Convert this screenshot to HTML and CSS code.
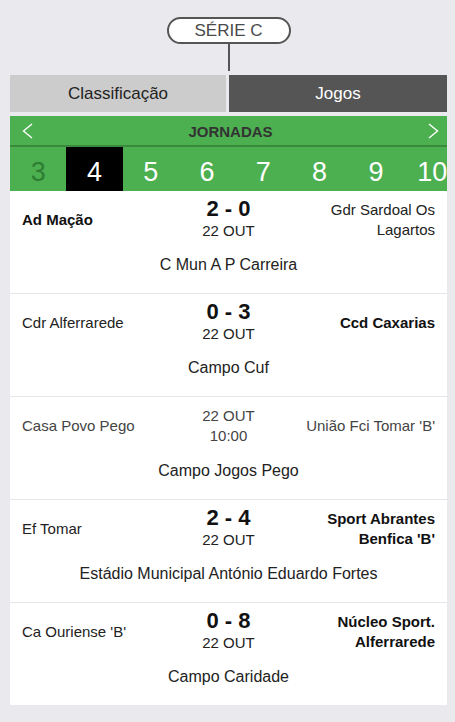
FILE: index.html
```html
<!DOCTYPE html>
<html lang="pt">
<head>
<meta charset="utf-8">
<title>Série C - Jogos</title>
<link rel="stylesheet" href="styles.css">
</head>
<body>
<div class="page">
  <header class="serie">
    <div class="pill">SÉRIE C</div>
    <div class="stem"></div>
  </header>

  <nav class="tabs">
    <div class="tab">Classificação</div>
    <div class="tab active">Jogos</div>
  </nav>

  <section class="rounds">
    <div class="rounds-head">
      <svg class="chev left" width="11" height="16" viewBox="0 0 11 16"><polyline points="10,1 1.5,8 10,15" fill="none" stroke="#fff" stroke-width="1.4"/></svg>
      <div class="rounds-title">JORNADAS</div>
      <svg class="chev right" width="11" height="16" viewBox="0 0 11 16"><polyline points="1,1 9.5,8 1,15" fill="none" stroke="#fff" stroke-width="1.4"/></svg>
    </div>
    <div class="rounds-nums">
      <div class="num past">3</div>
      <div class="num current">4</div>
      <div class="num">5</div>
      <div class="num">6</div>
      <div class="num">7</div>
      <div class="num">8</div>
      <div class="num">9</div>
      <div class="num">10</div>
    </div>
  </section>

  <section class="matches">
    <article class="match">
      <div class="match-row">
        <div class="team home win">Ad Mação</div>
        <div class="mid"><div class="score">2 - 0</div><div class="date">22 OUT</div></div>
        <div class="team away">Gdr Sardoal Os Lagartos</div>
      </div>
      <div class="venue">C Mun A P Carreira</div>
    </article>
    <article class="match">
      <div class="match-row">
        <div class="team home">Cdr Alferrarede</div>
        <div class="mid"><div class="score">0 - 3</div><div class="date">22 OUT</div></div>
        <div class="team away win">Ccd Caxarias</div>
      </div>
      <div class="venue">Campo Cuf</div>
    </article>
    <article class="match upcoming">
      <div class="match-row">
        <div class="team home">Casa Povo Pego</div>
        <div class="mid"><div class="when">22 OUT</div><div class="when">10:00</div></div>
        <div class="team away">União Fci Tomar 'B'</div>
      </div>
      <div class="venue">Campo Jogos Pego</div>
    </article>
    <article class="match">
      <div class="match-row">
        <div class="team home">Ef Tomar</div>
        <div class="mid"><div class="score">2 - 4</div><div class="date">22 OUT</div></div>
        <div class="team away win">Sport Abrantes Benfica 'B'</div>
      </div>
      <div class="venue">Estádio Municipal António Eduardo Fortes</div>
    </article>
    <article class="match">
      <div class="match-row">
        <div class="team home">Ca Ouriense 'B'</div>
        <div class="mid"><div class="score">0 - 8</div><div class="date">22 OUT</div></div>
        <div class="team away win">Núcleo Sport. Alferrarede</div>
      </div>
      <div class="venue">Campo Caridade</div>
    </article>
  </section>
</div>
</body>
</html>
```
FILE: styles.css
```css
* { box-sizing: border-box; }
html, body { margin: 0; padding: 0; }
body {
  background: #eaeaee;
  font-family: "Liberation Sans", Arial, sans-serif;
  color: #222;
}
.page {
  width: 437px;
  margin: 0 10px;
  padding-top: 17px;
}
.serie {
  display: flex;
  flex-direction: column;
  align-items: center;
}
.pill {
  width: 124px;
  height: 27px;
  border: 2px solid #555;
  border-radius: 14px;
  background: #fff;
  color: #4a4a4a;
  font-size: 17px;
  line-height: 23px;
  text-align: center;
}
.stem {
  width: 2px;
  height: 27px;
  background: #555;
}
.tabs {
  margin-top: 4px;
  display: grid;
  grid-template-columns: 216px 1fr;
  gap: 3px;
}
.tab {
  height: 37px;
  line-height: 37px;
  text-align: center;
  font-size: 17px;
  background: #cccccc;
  color: #222;
}
.tab.active {
  background: #555555;
  color: #fff;
}
.rounds {
  margin-top: 4px;
  background: #4caf50;
}
.rounds-head {
  height: 31px;
  display: grid;
  grid-template-columns: 1fr auto 1fr;
  align-items: center;
  padding: 0 8px 0 12px;
  border-bottom: 2px solid #3a8a3d;
}
.chev { display: block; }
.chev.left { justify-self: start; }
.chev.right { justify-self: end; }
.rounds-title {
  font-weight: bold;
  font-size: 15px;
  color: #333;
  padding-top: 2px;
}
.rounds-nums {
  display: flex;
  height: 44px;
  overflow: hidden;
}
.num {
  flex: 0 0 56.3px;
  text-align: center;
  font-size: 27px;
  line-height: 36px;
  padding-top: 7px;
  color: #fff;
}
.num.past { color: #2e7d32; }
.num.current { background: #000; }
.matches { background: #fff; }
.match {
  padding: 7px 12px 18px;
}
.match + .match { border-top: 1px solid #e6e6ea; }
.match-row {
  display: grid;
  grid-template-columns: 1fr 1fr 1fr;
  align-items: center;
  min-height: 43px;
}
.team {
  font-size: 15px;
  line-height: 20px;
  color: #222;
}
.team.away { text-align: right; }
.team.win { font-weight: bold; color: #111; }
.mid { text-align: center; }
.score {
  font-weight: bold;
  font-size: 22px;
  line-height: 22px;
  color: #111;
}
.date {
  font-size: 15px;
  line-height: 21px;
  color: #222;
}
.when {
  font-size: 15px;
  line-height: 20px;
}
.venue {
  margin-top: 14px;
  text-align: center;
  font-size: 16px;
  line-height: 20px;
  color: #222;
}
.upcoming .team,
.upcoming .when { color: #444; }
```
